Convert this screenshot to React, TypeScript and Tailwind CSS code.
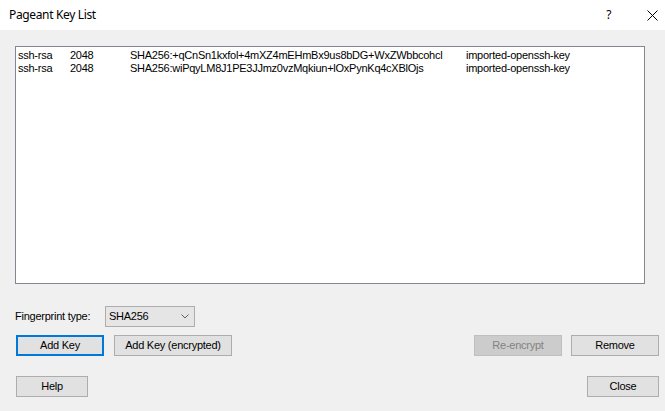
import React from "react";

const rows = [
  ["ssh-rsa", "2048", "SHA256:+qCnSn1kxfol+4mXZ4mEHmBx9us8bDG+WxZWbbcohcl", "imported-openssh-key"],
  ["ssh-rsa", "2048", "SHA256:wiPqyLM8J1PE3JJmz0vzMqkiun+lOxPynKq4cXBlOjs", "imported-openssh-key"],
];

function Btn({ children, w, variant }: { children: React.ReactNode; w: string; variant?: "default" | "disabled" }) {
  const base = "h-[21px] flex items-center justify-center leading-[13px] ";
  if (variant === "default")
    return <div className={base + w + " border-2 border-[#0078d7] bg-[#e1e1e1] text-black"}>{children}</div>;
  if (variant === "disabled")
    return <div className={base + w + " border border-[#bfbfbf] bg-[#cccccc] text-[#838383]"}>{children}</div>;
  return <div className={base + w + " border border-[#adadad] bg-[#e1e1e1] text-black"}>{children}</div>;
}

export default function App() {
  return (
    <div className="w-[665px] h-[411px] bg-[#f0f0f0] flex flex-col overflow-hidden font-['Liberation_Sans',Arial,sans-serif] text-[11px] tracking-[-0.25px] text-black">
      <div className="h-[30px] bg-white flex items-center shrink-0 font-['Noto_Sans',sans-serif] text-[12px] tracking-[-0.35px]">
        <span className="ml-[9px] leading-[16px]">Pageant Key List</span>
        <span className="ml-auto leading-[16px]">?</span>
        <svg className="ml-[36px] mr-[7px]" width="11" height="11" viewBox="0 0 11 11">
          <path d="M0.5 0.5 L10.5 10.5 M10.5 0.5 L0.5 10.5" stroke="#000" strokeWidth="1" fill="none" />
        </svg>
      </div>
      <div className="flex flex-col pl-[15px] pt-[16px]">
        <div className="w-[630px] h-[238px] border border-[#828790] bg-white pt-[2px]">
          {rows.map((r, i) => (
            <div key={i} className="flex h-[13px] leading-[13px] pl-[2px] whitespace-nowrap">
              <span className="w-[52px]">{r[0]}</span>
              <span className="w-[60px]">{r[1]}</span>
              <span className="w-[336px]">{r[2]}</span>
              <span>{r[3]}</span>
            </div>
          ))}
        </div>
        <div className="mt-[22px] flex items-center">
          <span className="w-[90px] leading-[13px]">Fingerprint type:</span>
          <div className="w-[90px] h-[21px] border border-[#adadad] bg-[#e5e5e5] flex items-center pl-[3px] pr-[5px]">
            <span className="leading-[13px]">SHA256</span>
            <svg className="ml-auto" width="8" height="5" viewBox="0 0 8 5">
              <path d="M0.5 0.5 L4 4 L7.5 0.5" stroke="#606060" strokeWidth="1" fill="none" />
            </svg>
          </div>
        </div>
        <div className="mt-[8px] flex w-[644px] pl-[1px]">
          <Btn w="w-[88px]" variant="default">Add Key</Btn>
          <div className="ml-[10px]">
            <Btn w="w-[118px]">Add Key (encrypted)</Btn>
          </div>
          <div className="ml-auto">
            <Btn w="w-[88px]" variant="disabled">Re-encrypt</Btn>
          </div>
          <div className="ml-[9px]">
            <Btn w="w-[88px]">Remove</Btn>
          </div>
        </div>
        <div className="mt-[20px] flex justify-between w-[644px] pl-[1px]">
          <Btn w="w-[72px]">Help</Btn>
          <Btn w="w-[72px]">Close</Btn>
        </div>
      </div>
    </div>
  );
}
